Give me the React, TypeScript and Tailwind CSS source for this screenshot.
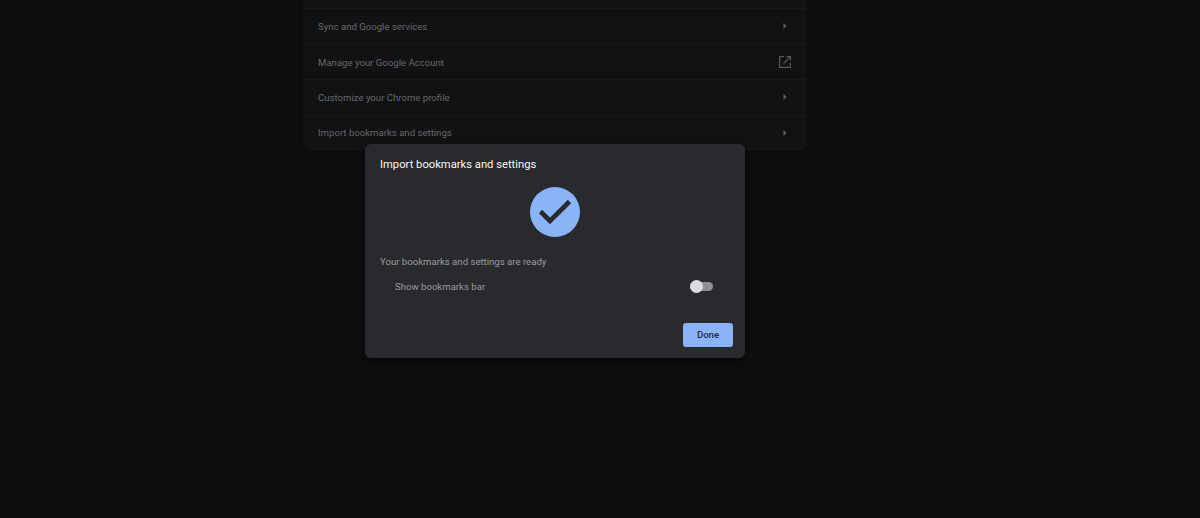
const rows = [
  { label: "Sync and Google services", ext: false },
  { label: "Manage your Google Account", ext: true },
  { label: "Customize your Chrome profile", ext: false },
  { label: "Import bookmarks and settings", ext: false },
];

function Arrow() {
  return (
    <svg width="6" height="8" viewBox="0 0 6 8" className="mr-[19px]">
      <path d="M1.5 1 L4.5 4 L1.5 7 Z" fill="#5f6164" />
    </svg>
  );
}

function External() {
  return (
    <svg width="14" height="14" viewBox="0 0 14 14" fill="none" stroke="#55575a" strokeWidth="1.2" className="mr-[15px]">
      <path d="M6 1.6 H1.6 V12.4 H12.4 V8" />
      <path d="M8.5 1.6 H12.4 V5.5" />
      <path d="M12.2 1.8 L5.5 8.5" />
    </svg>
  );
}

export default function App() {
  return (
    <div className="relative h-[518px] overflow-hidden bg-[#0d0e10] font-['Roboto',sans-serif]">
      <div className="ml-[303px] w-[504px] rounded-b-lg bg-[#111214] shadow-[0_1px_3px_rgba(0,0,0,0.4)]">
        <div className="h-[9px] border-b border-[#18191b]" />
        {rows.map((r, i) => (
          <div
            key={r.label}
            className={`flex h-[35.5px] items-center justify-between pl-[15px] ${i < rows.length - 1 ? "border-b border-[#18191b]" : ""}`}
          >
            <span className={`text-[9.6px] text-[#66686b] ${i < 3 ? "translate-y-[1px]" : ""}`}>{r.label}</span>
            <span className="flex items-center">{r.ext ? <External /> : <Arrow />}</span>
          </div>
        ))}
      </div>

      <div className="absolute left-[365px] top-[144px] flex h-[214px] w-[380px] flex-col rounded-md bg-[#292a2d] shadow-[0_4px_12px_rgba(0,0,0,0.5)]">
        <h2 className="pl-[15px] pt-[13px] text-[11.2px] leading-[14px] font-normal tracking-[0.01px] text-[#f6f7f8] translate-y-[1px]">
          Import bookmarks and settings
        </h2>
        <div className="mt-[16px] flex justify-center">
          <div className="flex h-[50px] w-[50px] items-center justify-center rounded-full bg-[#8ab4f8]">
            <svg width="36" height="36" viewBox="0 0 36 36" fill="none" stroke="#292a2d" strokeWidth="4.6">
              <path d="M3.5 17.5 L13 27 L32.5 7.5" />
            </svg>
          </div>
        </div>
        <p className="mt-[19px] pl-[15px] text-[9.6px] leading-[12px] text-[#9a9b9e]">
          Your bookmarks and settings are ready
        </p>
        <div className="mt-[13px] flex items-center justify-between pl-[30px] pr-[32px]">
          <span className="text-[9.6px] leading-[12px] text-[#9a9b9e]">Show bookmarks bar</span>
          <div className="relative mb-[1px] h-[9px] w-[23px] rounded-full bg-[#8f9093]">
            <span className="absolute left-0 top-[-2px] h-[13px] w-[13px] rounded-full bg-[#dadce0]" />
          </div>
        </div>
        <div className="mt-auto flex justify-end pb-[11px] pr-[12px]">
          <button className="h-[24px] w-[50px] rounded-[3px] bg-[#8ab4f8] text-[9.6px] font-medium text-[#202b43]">
            Done
          </button>
        </div>
      </div>
    </div>
  );
}
